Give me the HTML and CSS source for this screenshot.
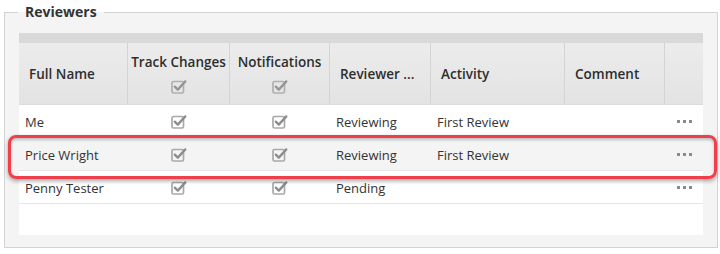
FILE: index.html
```html
<!DOCTYPE html>
<html>
<head>
<meta charset="utf-8">
<link rel="stylesheet" href="styles.css">
</head>
<body>
<div class="page">
  <fieldset class="panel">
    <legend class="panel-title">Reviewers</legend>
    <div class="grid">
      <div class="grid-topbar"></div>
      <div class="grid-head">
        <div class="hcell">Full Name</div>
        <div class="hcell center"><span>Track Changes</span><svg class="chk light" viewBox="0 0 16 15"><rect x="1" y="2.5" width="11.5" height="11.5" rx="1.5" fill="none" stroke-width="1.7"/><path d="M3.8 7.6 L6.8 10.6 L14.3 2.4" fill="none" stroke-width="2.3" stroke-linecap="round" stroke-linejoin="round"/></svg></div>
        <div class="hcell center"><span>Notifications</span><svg class="chk light" viewBox="0 0 16 15"><rect x="1" y="2.5" width="11.5" height="11.5" rx="1.5" fill="none" stroke-width="1.7"/><path d="M3.8 7.6 L6.8 10.6 L14.3 2.4" fill="none" stroke-width="2.3" stroke-linecap="round" stroke-linejoin="round"/></svg></div>
        <div class="hcell">Reviewer ...</div>
        <div class="hcell">Activity</div>
        <div class="hcell">Comment</div>
        <div class="hcell"></div>
      </div>
      <div class="grid-body">
        <div class="row">
          <div class="cell">Me</div>
          <div class="cell center"><svg class="chk" viewBox="0 0 16 15"><rect x="1" y="2.5" width="11.5" height="11.5" rx="1.5" fill="none" stroke-width="1.7"/><path d="M3.8 7.6 L6.8 10.6 L14.3 2.4" fill="none" stroke-width="2.3" stroke-linecap="round" stroke-linejoin="round"/></svg></div>
          <div class="cell center"><svg class="chk" viewBox="0 0 16 15"><rect x="1" y="2.5" width="11.5" height="11.5" rx="1.5" fill="none" stroke-width="1.7"/><path d="M3.8 7.6 L6.8 10.6 L14.3 2.4" fill="none" stroke-width="2.3" stroke-linecap="round" stroke-linejoin="round"/></svg></div>
          <div class="cell">Reviewing</div>
          <div class="cell">First Review</div>
          <div class="cell"></div>
          <div class="cell center"><svg class="more" viewBox="0 0 15 3"><rect x="0" y="0" width="3" height="3"/><rect x="6" y="0" width="3" height="3"/><rect x="12" y="0" width="3" height="3"/></svg></div>
        </div>
        <div class="row selected">
          <div class="cell">Price Wright</div>
          <div class="cell center"><svg class="chk" viewBox="0 0 16 15"><rect x="1" y="2.5" width="11.5" height="11.5" rx="1.5" fill="none" stroke-width="1.7"/><path d="M3.8 7.6 L6.8 10.6 L14.3 2.4" fill="none" stroke-width="2.3" stroke-linecap="round" stroke-linejoin="round"/></svg></div>
          <div class="cell center"><svg class="chk" viewBox="0 0 16 15"><rect x="1" y="2.5" width="11.5" height="11.5" rx="1.5" fill="none" stroke-width="1.7"/><path d="M3.8 7.6 L6.8 10.6 L14.3 2.4" fill="none" stroke-width="2.3" stroke-linecap="round" stroke-linejoin="round"/></svg></div>
          <div class="cell">Reviewing</div>
          <div class="cell">First Review</div>
          <div class="cell"></div>
          <div class="cell center"><svg class="more" viewBox="0 0 15 3"><rect x="0" y="0" width="3" height="3"/><rect x="6" y="0" width="3" height="3"/><rect x="12" y="0" width="3" height="3"/></svg></div>
        </div>
        <div class="row">
          <div class="cell">Penny Tester</div>
          <div class="cell center"><svg class="chk" viewBox="0 0 16 15"><rect x="1" y="2.5" width="11.5" height="11.5" rx="1.5" fill="none" stroke-width="1.7"/><path d="M3.8 7.6 L6.8 10.6 L14.3 2.4" fill="none" stroke-width="2.3" stroke-linecap="round" stroke-linejoin="round"/></svg></div>
          <div class="cell center"><svg class="chk" viewBox="0 0 16 15"><rect x="1" y="2.5" width="11.5" height="11.5" rx="1.5" fill="none" stroke-width="1.7"/><path d="M3.8 7.6 L6.8 10.6 L14.3 2.4" fill="none" stroke-width="2.3" stroke-linecap="round" stroke-linejoin="round"/></svg></div>
          <div class="cell">Pending</div>
          <div class="cell"></div>
          <div class="cell"></div>
          <div class="cell center"><svg class="more" viewBox="0 0 15 3"><rect x="0" y="0" width="3" height="3"/><rect x="6" y="0" width="3" height="3"/><rect x="12" y="0" width="3" height="3"/></svg></div>
        </div>
      </div>
    </div>
  </fieldset>
  <div class="highlight"></div>
</div>
</body>
</html>
```

FILE: styles.css
```css
html, body {
  margin: 0;
  padding: 0;
  background: #ffffff;
}

body {
  font-family: "Open Sans", "Liberation Sans", sans-serif;
  color: #333333;
  width: 720px;
  height: 254px;
  overflow: hidden;
}

.page {
  position: relative;
  width: 720px;
  height: 254px;
}

.panel {
  margin: 2px 2px 0 4px;
  padding: 11px 14px 12px 14px;
  border: 1px solid #d3d3d3;
  background: #f4f4f4;
  min-width: 0;
}

.panel-title {
  font-size: 14px;
  font-weight: 700;
  line-height: 20px;
  color: #333333;
  padding: 0 7px;
  margin-left: -1px;
}

.grid {
  background: #ffffff;
  height: 202px;
  display: flex;
  flex-direction: column;
}

.grid-topbar {
  height: 10px;
  background: #d9d9d9;
}

.grid-head,
.row {
  display: grid;
  grid-template-columns: 109px 102px 100px 101px 134px 100px 38px;
}

.grid-head {
  height: 62px;
  background: linear-gradient(#ececec, #e3e3e3);
  border-bottom: 1px solid #dcdcdc;
  box-sizing: border-box;
}

.hcell {
  display: flex;
  align-items: center;
  padding: 0 10px;
  font-size: 13.5px;
  font-weight: 600;
  color: #2e2e2e;
  border-right: 1px solid #d4d4d4;
  white-space: nowrap;
  overflow: hidden;
}

.hcell:last-child {
  border-right: 0;
}

.hcell.center {
  flex-direction: column;
  justify-content: center;
  padding: 0 0 2px 0;
  gap: 7px;
}

.hcell.center span {
  line-height: 20px;
}

.chk {
  width: 16px;
  height: 15px;
  display: block;
  stroke: #8c8c8c;
}

.chk rect {
  stroke: #a9a9a9;
}

.chk.light {
  stroke: #959595;
}

.chk.light rect {
  stroke: #b0b0b0;
}

.row {
  height: 33px;
  border-bottom: 1px solid #e6e6e6;
  box-sizing: border-box;
}

.row.selected {
  background: #f4f4f4;
}

.cell {
  display: flex;
  align-items: center;
  padding: 2px 6px 0 6px;
  font-size: 13px;
  color: #333333;
  white-space: nowrap;
}

.cell.center {
  justify-content: center;
  padding: 0;
}

.more {
  width: 15px;
  height: 3px;
  fill: #8a8a8a;
  display: block;
}

.highlight {
  position: absolute;
  left: 8px;
  top: 133px;
  width: 709px;
  height: 44px;
  box-sizing: border-box;
  border: 3px solid #ee3f4a;
  border-radius: 8px;
  box-shadow: 0 2px 4px rgba(0, 0, 0, 0.35), inset 0 2px 3px rgba(0, 0, 0, 0.22);
  pointer-events: none;
}
```
